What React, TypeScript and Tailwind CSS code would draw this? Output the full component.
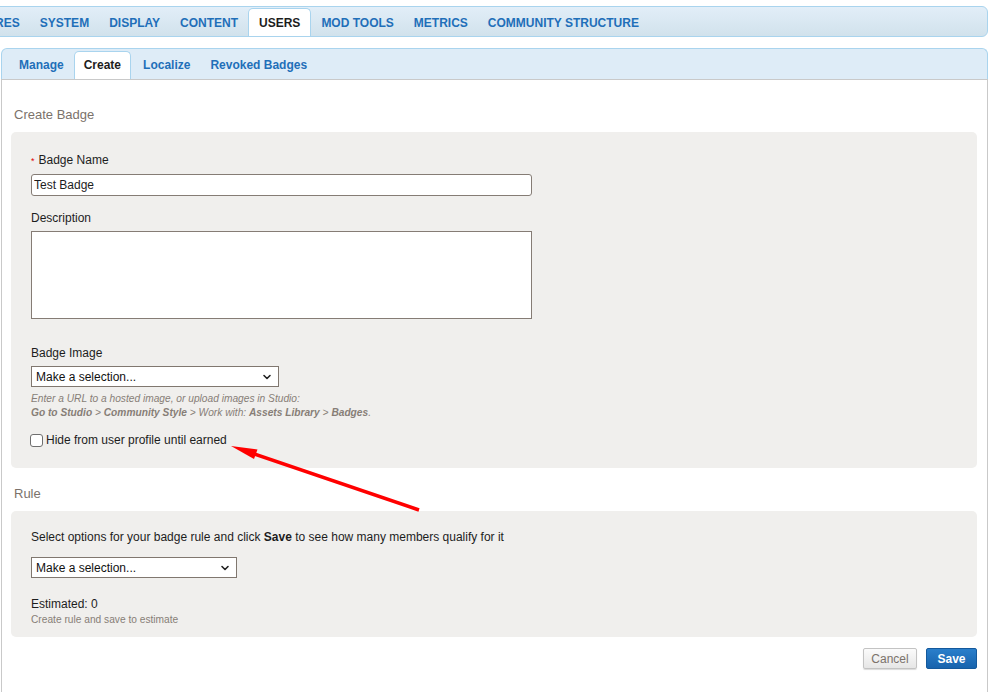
import { ChevronDown } from "lucide-react";

const topTabs = ["FEATURES", "SYSTEM", "DISPLAY", "CONTENT", "USERS", "MOD TOOLS", "METRICS", "COMMUNITY STRUCTURE"];
const subTabs = ["Manage", "Create", "Localize", "Revoked Badges"];

function FakeSelect({ width }: { width: string }) {
  return (
    <div className={`relative h-[21px] ${width}`}>
      <select className="h-full w-full appearance-none rounded-none border border-[#80776f] bg-white pl-[4px] text-[12px] text-[#111] outline-none">
        <option>Make a selection...</option>
      </select>
      <ChevronDown
        size={12}
        strokeWidth={3.2}
        className="pointer-events-none absolute right-[6px] top-[5px] text-[#222]"
      />
    </div>
  );
}

export default function App() {
  return (
    <div className="relative h-[692px] w-[999px] overflow-hidden bg-white font-['Liberation_Sans',Arial,sans-serif] text-[12px] text-[#1d1d1d]">
      {/* top navigation */}
      <div className="ml-[-55px] mt-[6px] flex h-[31px] w-[1043px] items-end rounded-r-[6px] border border-[#a9d4ee] bg-gradient-to-b from-[#e2eef8] to-[#d1e2ec]">
        {topTabs.map((t) => (
          <div
            key={t}
            className={
              t === "USERS"
                ? "flex h-[28px] items-center rounded-t-[5px] border border-b-0 border-[#a9d4ee] bg-white px-[10px] text-[12px] font-bold text-[#1d1d1d]"
                : "flex h-[28px] items-center border border-b-0 border-transparent px-[9px] text-[12px] font-bold text-[#1f6fb9]"
            }
          >
            {t}
          </div>
        ))}
      </div>

      {/* panel */}
      <div className="ml-[1px] mt-[11px] w-[987px]">
        <div className="flex h-[31px] items-end rounded-t-[6px] border border-b-0 border-[#a9d4ee] bg-[#deecf7] pl-[7px]">
          {subTabs.map((t) => (
            <div
              key={t}
              className={
                t === "Create"
                  ? "mr-[2px] flex h-[28px] items-center rounded-t-[5px] border border-b-0 border-[#a9d4ee] bg-white px-[9px] pb-[1px] text-[12px] font-bold text-[#1d1d1d]"
                  : "flex h-[28px] items-center border border-b-0 border-transparent px-[9px] pb-[1px] text-[12px] font-bold text-[#1f6fb9]"
              }
            >
              {t}
            </div>
          ))}
        </div>

        <div className="h-[620px] border border-[#c9c9c9] bg-white pl-[9px] pr-[10px] pt-[27px]">
          <div className="pl-[3px] text-[13px] leading-[16px] text-[#7b726b]">Create Badge</div>

          <div className="mt-[9px] rounded-[5px] bg-[#f0efed] pb-[21px] pl-[20px] pt-[21px]">
            <div className="leading-[14px]">
              <span className="mr-[4px] text-[9px] text-[#e00000]">*</span>Badge Name
            </div>
            <input
              defaultValue="Test Badge"
              className="mt-[6px] block h-[22px] w-[501px] rounded-[3px] border border-[#857c75] bg-white px-[2px] text-[12px] outline-none"
            />
            <div className="mt-[15px] leading-[14px]">Description</div>
            <textarea className="mt-[6px] block h-[88px] w-[501px] resize-none rounded-none border border-[#857c75] bg-white outline-none" />

            <div className="mt-[27px] leading-[14px]">Badge Image</div>
            <div className="mt-[6px]">
              <FakeSelect width="w-[248px]" />
            </div>
            <div className="mt-[5px] text-[10.2px] italic leading-[13.5px] text-[#877e77]">
              <div>Enter a URL to a hosted image, or upload images in Studio:</div>
              <div>
                <b>Go to Studio</b> &gt; <b>Community Style</b> &gt; Work with: <b>Assets Library</b> &gt; <b>Badges</b>.
              </div>
            </div>
            <label className="mt-[14px] flex h-[14px] items-center gap-[3px]">
              <span className="ml-[-1px] inline-block h-[13px] w-[13px] rounded-[3px] border border-[#6f6f6f] bg-white" />
              <span>Hide from user profile until earned</span>
            </label>
          </div>

          <div className="mt-[18px] pl-[3px] text-[13px] leading-[16px] text-[#7b726b]">Rule</div>

          <div className="mt-[9px] rounded-[5px] bg-[#f0efed] pb-[10px] pl-[20px] pt-[19px]">
            <div className="leading-[14px]">
              Select options for your badge rule and click <b>Save</b> to see how many members qualify for it
            </div>
            <div className="mt-[13px]">
              <FakeSelect width="w-[206px]" />
            </div>
            <div className="mt-[19px] leading-[14px]">Estimated: 0</div>
            <div className="mt-[2px] text-[10.2px] leading-[14px] text-[#877e77]">Create rule and save to estimate</div>
          </div>

          <div className="mt-[11px] flex justify-end gap-[9px]">
            <button className="h-[21px] w-[54px] rounded-[2px] border border-[#c3c3c3] bg-gradient-to-b from-[#fbfbfb] to-[#e6e6e6] text-[12px] text-[#7b726b] shadow-[0_1px_1px_rgba(0,0,0,0.15)]">
              Cancel
            </button>
            <button className="h-[21px] w-[51px] rounded-[2px] border border-[#14599c] bg-gradient-to-b from-[#2a7fcb] to-[#1763ad] text-[12px] font-bold text-white">
              Save
            </button>
          </div>
        </div>
      </div>

      {/* annotation arrow */}
      <svg className="pointer-events-none absolute left-0 top-0" width="999" height="692">
        <line x1="250" y1="452.5" x2="419" y2="510" stroke="#ff0000" strokeWidth="3.5" />
        <polygon points="231,446 257.5,449.5 254,459" fill="#ff0000" />
      </svg>
    </div>
  );
}
